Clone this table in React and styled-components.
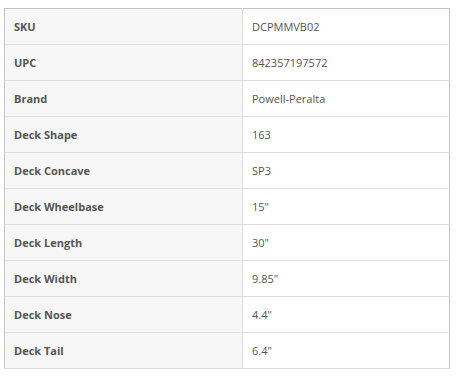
import React from 'react';
import styled, { createGlobalStyle } from 'styled-components';

const specs = [
  { label: 'SKU', value: 'DCPMMVB02' },
  { label: 'UPC', value: '842357197572' },
  { label: 'Brand', value: 'Powell-Peralta' },
  { label: 'Deck Shape', value: '163' },
  { label: 'Deck Concave', value: 'SP3' },
  { label: 'Deck Wheelbase', value: '15"' },
  { label: 'Deck Length', value: '30"' },
  { label: 'Deck Width', value: '9.85"' },
  { label: 'Deck Nose', value: '4.4"' },
  { label: 'Deck Tail', value: '6.4"' },
];

const GlobalStyle = createGlobalStyle`
  body {
    margin: 0;
    background: #fff;
    font-family: "Open Sans", "Liberation Sans", sans-serif;
  }
`;

const Wrapper = styled.div`
  padding: 8px 8px 0 4px;
`;

const Table = styled.table`
  width: 446px;
  border-collapse: collapse;
  border: 1px solid #c4c4c4;
  font-size: 11px;
  color: #555;
`;

const Row = styled.tr`
  height: 36px;
  border-bottom: 1px solid #ddd;
`;

const Label = styled.th`
  width: 228px;
  padding: 0 0 0 9px;
  text-align: left;
  font-weight: 700;
  background: #f7f7f7;
  border-right: 1px solid #ddd;
`;

const Value = styled.td`
  padding: 0 0 0 9px;
  background: #fff;
`;

const App = () => {
  return (
    <>
      <GlobalStyle />
      <Wrapper>
        <Table>
          <tbody>
            {specs.map(({ label, value }) => (
              <Row key={label}>
                <Label>{label}</Label>
                <Value>{value}</Value>
              </Row>
            ))}
          </tbody>
        </Table>
      </Wrapper>
    </>
  );
};

export default App;
